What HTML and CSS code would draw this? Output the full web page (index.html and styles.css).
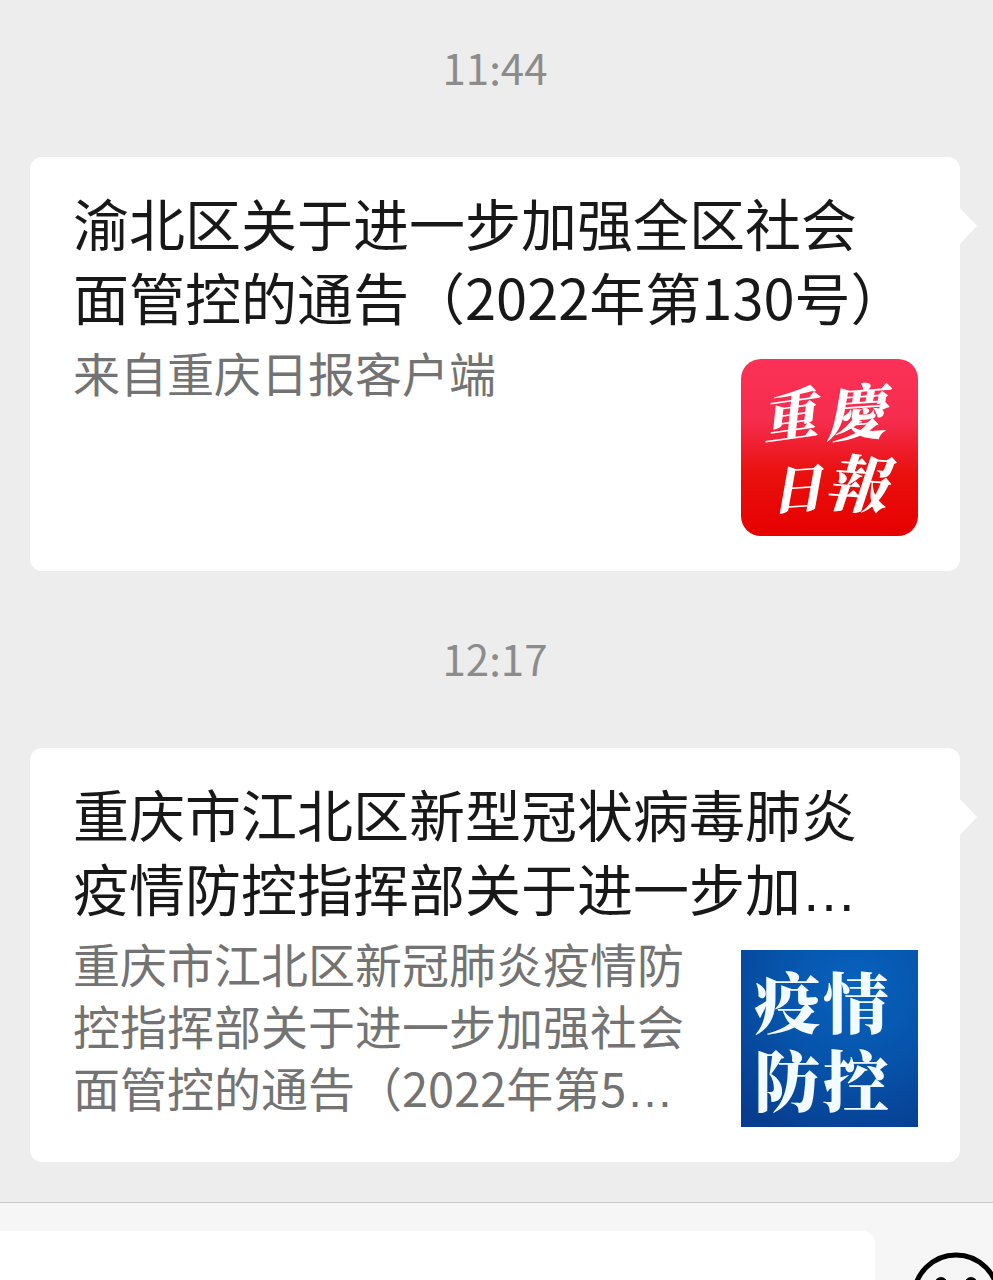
FILE: index.html
```html
<!DOCTYPE html>
<html lang="zh-CN">
<head>
	<meta charset="utf-8">
	<title>聊天</title>
	<link rel="stylesheet" href="styles.css">
</head>
<body>
	<div class="chat">
		<div class="time">11:44</div>
		<a href="#" class="card">
			<h3 class="title">渝北区关于进一步加强全区社会面管控的通告（2022年第130号）</h3>
			<div class="info">
				<p class="desc">来自重庆日报客户端</p>
				<svg class="thumb" viewBox="0 0 177 177">
					<defs>
						<linearGradient id="red" x1="0" y1="0" x2="0" y2="1">
							<stop offset="0" stop-color="#fd3158"/>
							<stop offset="0.35" stop-color="#f52c4c"/>
							<stop offset="0.65" stop-color="#e9100d"/>
							<stop offset="1" stop-color="#e60000"/>
						</linearGradient>
					</defs>
					<rect width="177" height="177" rx="20" fill="url(#red)"/>
					<g class="brush">
						<text x="20" y="77" font-size="56" transform="rotate(-8 48 58)">重</text>
						<text x="84" y="76" font-size="60" transform="rotate(-4 114 55)">慶</text>
						<text x="29" y="149" font-size="52" transform="rotate(-4 55 130)">日</text>
						<text x="84" y="148" font-size="62" transform="rotate(4 116 126)">報</text>
					</g>
				</svg>
			</div>
		</a>

		<div class="time">12:17</div>
		<a href="#" class="card">
			<h3 class="title">重庆市江北区新型冠状病毒肺炎疫情防控指挥部关于进一步加<span class="dots">…</span></h3>
			<div class="info">
				<p class="desc">重庆市江北区新冠肺炎疫情防控指挥部关于进一步加强社会面管控的通告（2022年第5<span class="dots">…</span></p>
				<svg class="thumb" viewBox="0 0 177 177">
					<defs>
						<radialGradient id="blue" cx="0.65" cy="0.2" r="0.95">
							<stop offset="0" stop-color="#0862bd"/>
							<stop offset="0.5" stop-color="#0653aa"/>
							<stop offset="1" stop-color="#073c8e"/>
						</radialGradient>
					</defs>
					<rect width="177" height="177" fill="url(#blue)"/>
					<g class="song">
						<text x="13 82" y="78" font-size="66">疫情</text>
						<text x="13 82" y="156" font-size="66">防控</text>
					</g>
				</svg>
			</div>
		</a>
	</div>

	<!-- 输入栏 -->
	<div class="bar">
		<input type="text" class="input" aria-label="输入消息">
		<button type="button" class="face" aria-label="表情">
			<svg viewBox="0 0 90 90" width="90" height="90" fill="none" stroke="#000" stroke-width="5">
				<circle cx="45" cy="45" r="42"/>
				<circle cx="30" cy="31" r="6" fill="#000" stroke="none"/>
				<circle cx="60" cy="31" r="6" fill="#000" stroke="none"/>
				<path d="M21 50a24 24 0 0 0 48 0z"/>
			</svg>
		</button>
	</div>
</body>
</html>
```
FILE: styles.css
```css
*{
	box-sizing: border-box;
}
body{
	margin: 0;
	height: 100vh;
	overflow: hidden;
	display: flex;
	flex-direction: column;
	background: #ededed;
	font-family: "Noto Sans CJK SC", sans-serif;
}
.chat{
	flex: none;
	padding: 37px 33px 40px 30px;
}
.time{
	line-height: 60px;
	margin-bottom: 60px;
	font-size: 42px;
	text-align: center;
	color: #8c8c8c;
}
.card{
	display: block;
	position: relative;
	padding: 28px 42px 35px 43px;
	border-radius: 12px;
	background: #fff;
	color: #181818;
	text-decoration: none;
}
.card + .time{
	margin-top: 57px;
}
/*右侧小三角*/
.card::after{
	content: "";
	position: absolute;
	top: 50px;
	right: -17px;
	border: solid transparent;
	border-width: 19px 0 19px 18px;
	border-left-color: #fff;
}
.title{
	margin: 0;
	padding-right: 8px;
	font-size: 56px;
	font-weight: normal;
	line-height: 74px;
}
.info{
	display: flex;
	gap: 44px;
	padding-top: 8px;
}
.desc{
	flex: 1;
	margin: 0;
	font-size: 47px;
	line-height: 62px;
	color: #737373;
}
.dots{
	font-family: "Liberation Sans", sans-serif;
	line-height: 1;
}
.thumb{
	flex: none;
	width: 177px;
	height: 177px;
	margin-top: 18px;
}
.brush{
	fill: #fff;
	font-family: "Noto Serif CJK TC", "Noto Sans CJK TC", serif;
	font-weight: 900;
	font-style: italic;
}
.song{
	fill: #f2fbff;
	font-family: "Noto Serif CJK SC", "Noto Sans CJK SC", serif;
	font-weight: 900;
}
/*输入栏*/
.bar{
	flex: 1;
	min-height: 0;
	display: flex;
	align-items: flex-start;
	border-top: 1px solid #c8c8c8;
	background: #f6f6f6;
}
.input{
	flex: 1;
	min-width: 0;
	height: 110px;
	margin-top: 28px;
	padding: 0 30px;
	border: 0;
	border-radius: 0 12px 12px 0;
	background: #fff;
	font-size: 47px;
}
.face{
	flex: none;
	width: 90px;
	margin: 49px -8px 0 36px;
	padding: 0;
	border: 0;
	background: none;
}
```
